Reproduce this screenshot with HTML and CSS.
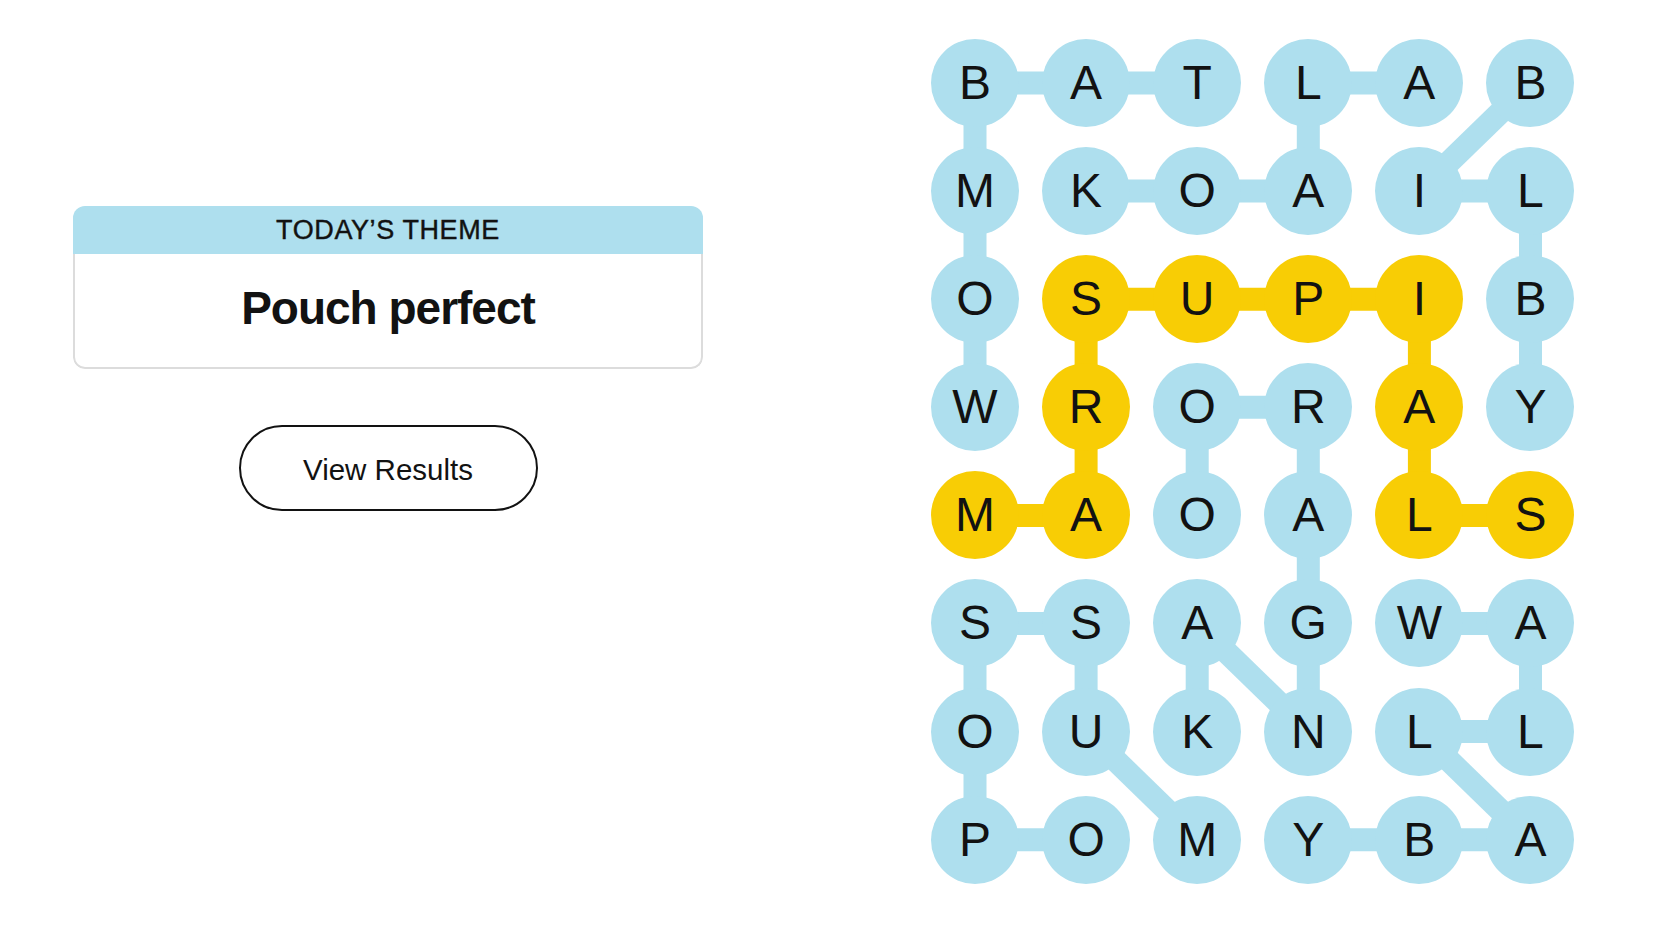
FILE: index.html
```html
<!DOCTYPE html>
<html lang="en">
<head>
<meta charset="utf-8">
<title>Strands</title>
<link rel="stylesheet" href="styles.css">
</head>
<body>
<main class="page">
  <section class="left">
    <div class="card">
      <div class="card-header">TODAY’S THEME</div>
      <div class="card-body"><h1 class="theme">Pouch perfect</h1></div>
    </div>
    <button class="results-btn" type="button">View Results</button>
  </section>

  <section class="board">
    <svg class="links" width="644" height="845" viewBox="0 0 644 845" aria-hidden="true">
      <g class="blue-links">
        <line x1="44" y1="44" x2="266.2" y2="44"/>
        <line x1="44" y1="44" x2="44" y2="368.3"/>
        <line x1="377.3" y1="44" x2="488.4" y2="44"/>
        <line x1="377.3" y1="44" x2="377.3" y2="152.1"/>
        <line x1="599.5" y1="44" x2="488.4" y2="152.1"/>
        <line x1="155.1" y1="152.1" x2="377.3" y2="152.1"/>
        <line x1="488.4" y1="152.1" x2="599.5" y2="152.1"/>
        <line x1="599.5" y1="152.1" x2="599.5" y2="368.3"/>
        <line x1="266.2" y1="368.3" x2="377.3" y2="368.3"/>
        <line x1="266.2" y1="368.3" x2="266.2" y2="476.4"/>
        <line x1="377.3" y1="368.3" x2="377.3" y2="692.6"/>
        <line x1="266.2" y1="584.5" x2="377.3" y2="692.6"/>
        <line x1="266.2" y1="584.5" x2="266.2" y2="692.6"/>
        <line x1="44" y1="584.5" x2="155.1" y2="584.5"/>
        <line x1="44" y1="584.5" x2="44" y2="800.7"/>
        <line x1="44" y1="800.7" x2="155.1" y2="800.7"/>
        <line x1="155.1" y1="584.5" x2="155.1" y2="692.6"/>
        <line x1="155.1" y1="692.6" x2="266.2" y2="800.7"/>
        <line x1="488.4" y1="584.5" x2="599.5" y2="584.5"/>
        <line x1="599.5" y1="584.5" x2="599.5" y2="692.6"/>
        <line x1="488.4" y1="692.6" x2="599.5" y2="692.6"/>
        <line x1="488.4" y1="692.6" x2="599.5" y2="800.7"/>
        <line x1="377.3" y1="800.7" x2="599.5" y2="800.7"/>
      </g>
      <g class="gold-links">
        <line x1="44" y1="476.4" x2="155.1" y2="476.4"/>
        <line x1="155.1" y1="476.4" x2="155.1" y2="260.2"/>
        <line x1="155.1" y1="260.2" x2="488.4" y2="260.2"/>
        <line x1="488.4" y1="260.2" x2="488.4" y2="476.4"/>
        <line x1="488.4" y1="476.4" x2="599.5" y2="476.4"/>
      </g>
    </svg>
    <div class="grid">
      <div class="cell found">B</div><div class="cell found">A</div><div class="cell found">T</div><div class="cell found">L</div><div class="cell found">A</div><div class="cell found">B</div>
      <div class="cell found">M</div><div class="cell found">K</div><div class="cell found">O</div><div class="cell found">A</div><div class="cell found">I</div><div class="cell found">L</div>
      <div class="cell found">O</div><div class="cell span">S</div><div class="cell span">U</div><div class="cell span">P</div><div class="cell span">I</div><div class="cell found">B</div>
      <div class="cell found">W</div><div class="cell span">R</div><div class="cell found">O</div><div class="cell found">R</div><div class="cell span">A</div><div class="cell found">Y</div>
      <div class="cell span">M</div><div class="cell span">A</div><div class="cell found">O</div><div class="cell found">A</div><div class="cell span">L</div><div class="cell span">S</div>
      <div class="cell found">S</div><div class="cell found">S</div><div class="cell found">A</div><div class="cell found">G</div><div class="cell found">W</div><div class="cell found">A</div>
      <div class="cell found">O</div><div class="cell found">U</div><div class="cell found">K</div><div class="cell found">N</div><div class="cell found">L</div><div class="cell found">L</div>
      <div class="cell found">P</div><div class="cell found">O</div><div class="cell found">M</div><div class="cell found">Y</div><div class="cell found">B</div><div class="cell found">A</div>
    </div>
  </section>
</main>
</body>
</html>
```
FILE: styles.css
```css
* { box-sizing: border-box; }

html, body {
  margin: 0;
  padding: 0;
  background: #ffffff;
  color: #121212;
  font-family: "Liberation Sans", Arial, sans-serif;
}

.page {
  display: flex;
  align-items: flex-start;
  gap: 228px;
  padding: 39px 0 0 73px;
}

.left {
  width: 630px;
  margin-top: 167px;
  display: flex;
  flex-direction: column;
  align-items: center;
}

.card {
  width: 630px;
  border-radius: 12px;
  overflow: hidden;
}

.card-header {
  height: 48px;
  background: #aedfee;
  display: flex;
  align-items: center;
  justify-content: center;
  padding-top: 1px;
  font-family: "Liberation Sans", Arial, sans-serif;
  font-size: 27px;
  letter-spacing: 0.6px;
  -webkit-text-stroke: 0.4px #121212;
  color: #121212;
}

.card-body {
  height: 115px;
  border: 2px solid #dcdcdc;
  border-top: none;
  border-radius: 0 0 12px 12px;
  display: flex;
  align-items: center;
  justify-content: center;
  padding-bottom: 4px;
}

.theme {
  margin: 0;
  font-size: 46px;
  font-weight: 700;
  letter-spacing: -1px;
  line-height: 1.15;
}

.results-btn {
  margin-top: 56px;
  width: 299px;
  height: 86px;
  border: 2px solid #121212;
  border-radius: 43px;
  background: #ffffff;
  color: #121212;
  font-family: "Liberation Sans", Arial, sans-serif;
  font-size: 29.5px;
  padding: 4px 0 0;
}

.board {
  position: relative;
  width: 644px;
  height: 845px;
}

.links {
  position: absolute;
  left: 0;
  top: 0;
  z-index: 0;
}

.links line {
  stroke-width: 23;
  stroke-linecap: butt;
}

.blue-links line { stroke: #aedfee; }
.gold-links line { stroke: #f8cd05; }

.grid {
  position: relative;
  z-index: 1;
  display: grid;
  grid-template-columns: repeat(6, 88px);
  grid-auto-rows: 88px;
  column-gap: 23.1px;
  row-gap: 20.1px;
}

.cell {
  width: 88px;
  height: 88px;
  border-radius: 50%;
  display: flex;
  align-items: center;
  justify-content: center;
  font-size: 48px;
  line-height: 1;
  color: #121212;
}

.found { background: #aedfee; }
.span { background: #f8cd05; }
```
